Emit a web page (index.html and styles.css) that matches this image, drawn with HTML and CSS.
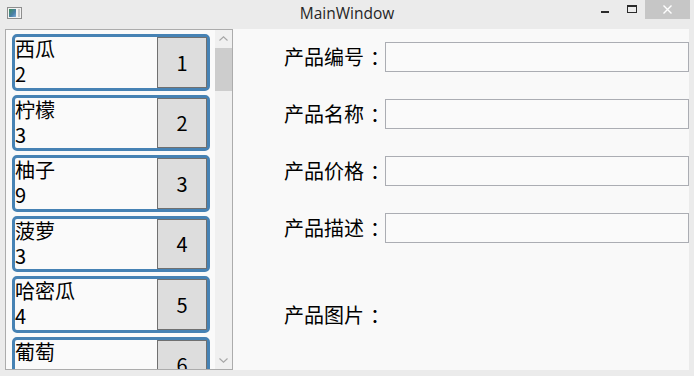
FILE: index.html
```html
<!DOCTYPE html>
<html lang="zh">
<head>
<meta charset="utf-8">
<title>MainWindow</title>
<link rel="stylesheet" href="styles.css">
</head>
<body>
<div class="window">
  <div class="titlebar">
    <div class="tb-left">
      <svg class="app-icon" width="15" height="12" viewBox="0 0 15 12">
        <defs>
          <linearGradient id="ig" x1="0" y1="0" x2="1" y2="1">
            <stop offset="0" stop-color="#3f8f5a"/>
            <stop offset="0.6" stop-color="#4a7fa8"/>
            <stop offset="1" stop-color="#7fb0d8"/>
          </linearGradient>
        </defs>
        <rect x="0.5" y="0.5" width="14" height="11" fill="#f2f2f2" stroke="#8e8e8e"/>
        <rect x="2" y="2" width="7" height="8" fill="url(#ig)"/>
        <rect x="11" y="2" width="2" height="8" fill="#c9c9c9"/>
      </svg>
    </div>
    <div class="title">MainWindow</div>
    <div class="controls">
      <div class="ctl min"><span class="min-glyph"></span></div>
      <div class="ctl max"><span class="max-glyph"></span></div>
      <div class="ctl close">
        <svg width="9" height="9" viewBox="0 0 9 9"><path d="M0.5 0.5 L8.5 8.5 M8.5 0.5 L0.5 8.5" stroke="#ffffff" stroke-width="1.4" fill="none"/></svg>
      </div>
    </div>
  </div>
  <div class="client">
    <div class="listbox">
      <div class="items">
        <div class="item"><div class="info"><div>西瓜</div><div>2</div></div><div class="btn">1</div></div>
        <div class="item"><div class="info"><div>柠檬</div><div>3</div></div><div class="btn">2</div></div>
        <div class="item"><div class="info"><div>柚子</div><div>9</div></div><div class="btn">3</div></div>
        <div class="item"><div class="info"><div>菠萝</div><div>3</div></div><div class="btn">4</div></div>
        <div class="item"><div class="info"><div>哈密瓜</div><div>4</div></div><div class="btn">5</div></div>
        <div class="item"><div class="info"><div>葡萄</div><div>5</div></div><div class="btn">6</div></div>
      </div>
      <div class="scrollbar">
        <div class="arrow">
          <svg width="9" height="5" viewBox="0 0 9 5"><path d="M0.5 4.5 L4.5 0.8 L8.5 4.5" stroke="#a6a6a6" stroke-width="1.1" fill="none"/></svg>
        </div>
        <div class="thumb"></div>
        <div class="track"></div>
        <div class="arrow">
          <svg width="9" height="5" viewBox="0 0 9 5"><path d="M0.5 0.5 L4.5 4.2 L8.5 0.5" stroke="#a6a6a6" stroke-width="1.1" fill="none"/></svg>
        </div>
      </div>
    </div>
    <div class="form">
      <div class="label">产品编号<span class="colon">：</span></div><div class="field"></div>
      <div class="label">产品名称<span class="colon">：</span></div><div class="field"></div>
      <div class="label">产品价格<span class="colon">：</span></div><div class="field"></div>
      <div class="label">产品描述<span class="colon">：</span></div><div class="field"></div>
      <div class="label">产品图片<span class="colon">：</span></div><div class="image-slot"></div>
    </div>
  </div>
</div>
</body>
</html>
```
FILE: styles.css
```css
html, body {
  margin: 0;
  padding: 0;
}
body {
  font-family: "Noto Sans CJK SC", "Noto Sans", sans-serif;
  color: #000;
}
.window {
  width: 694px;
  height: 376px;
  background: #ebebeb;
  display: flex;
  flex-direction: column;
  overflow: hidden;
}
.titlebar {
  height: 29px;
  flex-shrink: 0;
  display: grid;
  grid-template-columns: 1fr auto 1fr;
}
.tb-left {
  padding: 7px 0 0 7px;
}
.app-icon {
  display: block;
}
.title {
  font-family: "Open Sans", "Noto Sans", sans-serif;
  font-size: 15.5px;
  line-height: 20px;
  padding-top: 3px;
  color: #262626;
}
.controls {
  justify-self: end;
  display: flex;
  height: 19px;
  margin-right: 4px;
}
.ctl {
  width: 26px;
  display: flex;
  justify-content: center;
  align-items: flex-start;
}
.min-glyph {
  margin-top: 11px;
  margin-right: 2px;
  width: 8px;
  height: 2px;
  background: #2b2b2b;
}
.max-glyph {
  margin-top: 5px;
  width: 10px;
  height: 8px;
  box-sizing: border-box;
  border: 1px solid #2b2b2b;
  border-top-width: 2px;
}
.ctl.close {
  width: 45px;
  background: #c6c6c6;
  align-items: center;
}
.ctl.close svg {
  display: block;
}
.client {
  flex: 1;
  min-height: 0;
  margin: 0 5px 6px 5px;
  background: #f9f9f9;
  display: flex;
}
.listbox {
  width: 228px;
  flex-shrink: 0;
  box-sizing: border-box;
  border: 1px solid #acacac;
  background: #fafafa;
  display: flex;
}
.items {
  flex: 1;
  min-width: 0;
  padding: 4px 5px 0 6px;
  overflow: hidden;
}
.item {
  height: 56.5px;
  box-sizing: border-box;
  border: 3px solid #4682b4;
  border-radius: 5px;
  margin-bottom: 4px;
  background: #fafafa;
  display: flex;
}
.info {
  flex: 1;
  font-size: 20px;
  line-height: 25px;
  margin-top: -1px;
  white-space: nowrap;
}
.btn {
  width: 50px;
  flex-shrink: 0;
  box-sizing: border-box;
  border: 1px solid #707070;
  background: #dddddd;
  display: flex;
  align-items: center;
  justify-content: center;
  font-size: 20px;
}
.scrollbar {
  width: 17px;
  flex-shrink: 0;
  background: #f0f0f0;
  display: flex;
  flex-direction: column;
}
.arrow {
  height: 17px;
  display: flex;
  align-items: center;
  justify-content: center;
}
.arrow svg {
  display: block;
}
.thumb {
  height: 43px;
  margin-top: 1px;
  background: #cdcdcd;
}
.track {
  flex: 1;
}
.form {
  flex: 1;
  min-width: 0;
  padding: 13px 0 0 51px;
  display: grid;
  grid-template-columns: 101px 1fr;
  grid-template-rows: 30px 30px 30px 30px 89px;
  row-gap: 27px;
  align-content: start;
  align-items: center;
}
.label {
  font-size: 20px;
  line-height: 30px;
  white-space: nowrap;
}
.colon {
  display: inline-block;
  width: 13px;
  padding-left: 6px;
}
.field {
  height: 30px;
  box-sizing: border-box;
  border: 1px solid #abadb3;
  background: #fafafa;
}
.image-slot {
  height: 89px;
}
```
